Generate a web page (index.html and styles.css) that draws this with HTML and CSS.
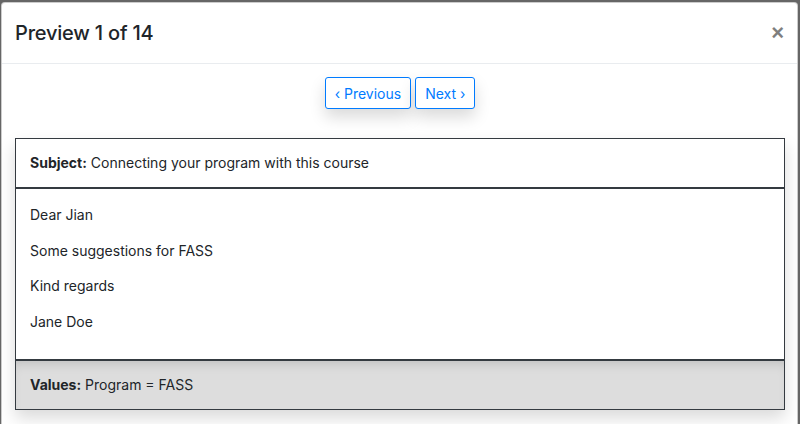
FILE: index.html
```html
<!DOCTYPE html>
<html>
<head>
<meta charset="utf-8">
<link rel="stylesheet" href="styles.css">
</head>
<body>
<div class="backdrop">
  <div class="modal">
    <div class="modal-header">
      <h5 class="modal-title">Preview 1 of 14</h5>
      <button class="close" type="button">×</button>
    </div>
    <div class="modal-body">
      <div class="nav">
        <button class="btn" type="button">‹ Previous</button>
        <button class="btn" type="button">Next ›</button>
      </div>
      <div class="mail">
        <div class="mail-subject"><b>Subject:</b> Connecting your program with this course</div>
        <div class="mail-body">
          <p>Dear Jian</p>
          <p>Some suggestions for FASS</p>
          <p>Kind regards</p>
          <p>Jane Doe</p>
        </div>
        <div class="mail-values"><b>Values:</b> Program = FASS</div>
      </div>
    </div>
  </div>
</div>
</body>
</html>
```
FILE: styles.css
```css
html, body {
  margin: 0;
  padding: 0;
  height: 100%;
  overflow: hidden;
}
body {
  background: #666;
  font-family: Inter, "Liberation Sans", sans-serif;
  color: #212529;
}
.backdrop {
  padding: 2px 2px 0 1px;
}
.modal {
  background: #fff;
  border: 1px solid rgba(0,0,0,.2);
  border-radius: 4px 4px 0 0;
  height: 440px;
}
.modal-header {
  display: flex;
  align-items: flex-start;
  justify-content: space-between;
  padding: 15px 13px 15px 13px;
  border-bottom: 1px solid #e9ecef;
}
.modal-title {
  margin: 0;
  font-size: 20px;
  font-weight: 500;
  line-height: 30px;
  letter-spacing: -0.2px;
}
.close {
  background: none;
  border: 0;
  padding: 0;
  margin: 0 0 0 0;
  font-family: "Liberation Sans", sans-serif;
  font-size: 22px;
  font-weight: 700;
  line-height: 30px;
  color: #000;
  opacity: .5;
}
.modal-body {
  padding: 13px 12px 0 13px;
}
.nav {
  display: flex;
  justify-content: center;
  gap: 4px;
  margin-bottom: 29px;
}
.btn {
  font-family: Inter, "Liberation Sans", sans-serif;
  font-size: 14px;
  line-height: 21px;
  padding: 5px 9px 4px;
  color: #007bff;
  background: #fff;
  border: 1px solid #007bff;
  border-radius: 3px;
  box-shadow: 0 8px 16px rgba(0,0,0,.15);
}
.mail {
  border: 1px solid #343a40;
  box-shadow: 0 8px 16px rgba(0,0,0,.15);
  font-size: 14px;
}
.mail-subject {
  padding: 0 14px;
  height: 48px;
  line-height: 48px;
  border-bottom: 2px solid #343a40;
}
.mail-body {
  padding: 8px 14px 20px;
  border-bottom: 2px solid #343a40;
}
.mail-body p {
  margin: 0;
  line-height: 35.5px;
}
.mail-values {
  background: #ddd;
  padding: 0 14px;
  height: 48px;
  line-height: 48px;
  box-shadow: inset 0 8px 12px -6px rgba(0,0,0,.15);
}
b { font-weight: 700; }
```
